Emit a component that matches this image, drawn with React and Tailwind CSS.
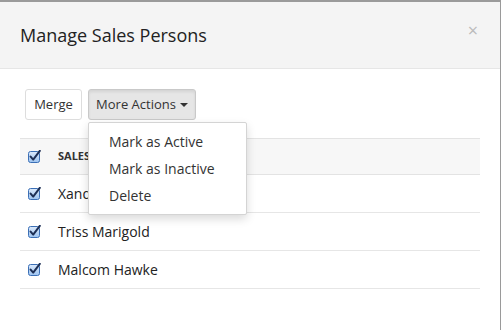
const people = ["Xander Crews", "Triss Marigold", "Malcom Hawke"];

function Check() {
  return (
    <svg width="13" height="13" viewBox="0 0 13 13" className="shrink-0">
      <defs>
        <linearGradient id="cb" x1="0" y1="0" x2="0" y2="1">
          <stop offset="0" stopColor="#dbe9fb" />
          <stop offset="1" stopColor="#9cc3f0" />
        </linearGradient>
      </defs>
      <rect x="0.5" y="1.5" width="11" height="11" rx="2" fill="url(#cb)" stroke="#3b6fb6" />
      <path d="M2.6 6.6 L5.2 9.6 L11.8 0.8" fill="none" stroke="#1d2f55" strokeWidth="2" strokeLinecap="round" strokeLinejoin="round" />
    </svg>
  );
}

export default function App() {
  return (
    <div
      className="w-[501px] h-[330px] bg-white border-t-2 border-r border-[#9a9a9a] text-[#222] overflow-hidden"
      style={{ fontFamily: "'Open Sans', Lato, sans-serif" }}
    >
      {/* HEADER */}
      <div className="h-[67px] bg-[#f4f4f4] border-b border-[#e6e6e6] flex items-center justify-between pl-5 pr-[22px]">
        <h1 className="text-[18px] text-[#222]">Manage Sales Persons</h1>
        <span className="text-[#bbb] text-[18px] leading-none -mt-[10px]">×</span>
      </div>

      {/* BODY */}
      <div className="px-5 pt-[20px]">
        <div className="flex gap-[6px] pl-[5px] relative">
          <button className="h-[31px] w-[57px] text-[13px] border border-[#ddd] rounded-[3px] bg-white text-[#333]">
            Merge
          </button>
          <div className="relative">
            <button className="h-[31px] w-[108px] justify-center text-[13px] border border-[#c9c9c9] rounded-[3px] bg-[#e6e6e6] text-[#333] flex items-center gap-[4px] shadow-[inset_0_2px_3px_rgba(0,0,0,0.08)]">
              More Actions
              <span className="inline-block w-0 h-0 border-l-[4px] border-r-[4px] border-t-[4px] border-l-transparent border-r-transparent border-t-[#333] mt-[1px]" />
            </button>

            {/* MENU */}
            <div className="absolute left-0 top-[33px] w-[159px] bg-white border border-[#d4d4d4] rounded-[2px] shadow-[0_4px_10px_rgba(0,0,0,0.15)] py-[5px] z-10">
              {["Mark as Active", "Mark as Inactive", "Delete"].map((t) => (
                <div key={t} className="h-[27px] flex items-center pl-[20px] text-[14px] text-[#333]">
                  {t}
                </div>
              ))}
            </div>
          </div>
        </div>

        {/* TABLE */}
        <div className="mt-[18px] w-[460px]">
          <div className="h-[37px] bg-[#f7f7f7] border-y border-[#e3e3e3] flex items-center pl-[8px] gap-[17px]">
            <Check />
            <span className="text-[11px] font-bold text-[#333]">SALESPERSON NAME</span>
          </div>
          {people.map((p) => (
            <div key={p} className="h-[38px] border-b border-[#e6e6e6] flex items-center pl-[8px] gap-[17px]">
              <Check />
              <span className="text-[14px] text-[#222]">{p}</span>
            </div>
          ))}
        </div>
      </div>
    </div>
  );
}
